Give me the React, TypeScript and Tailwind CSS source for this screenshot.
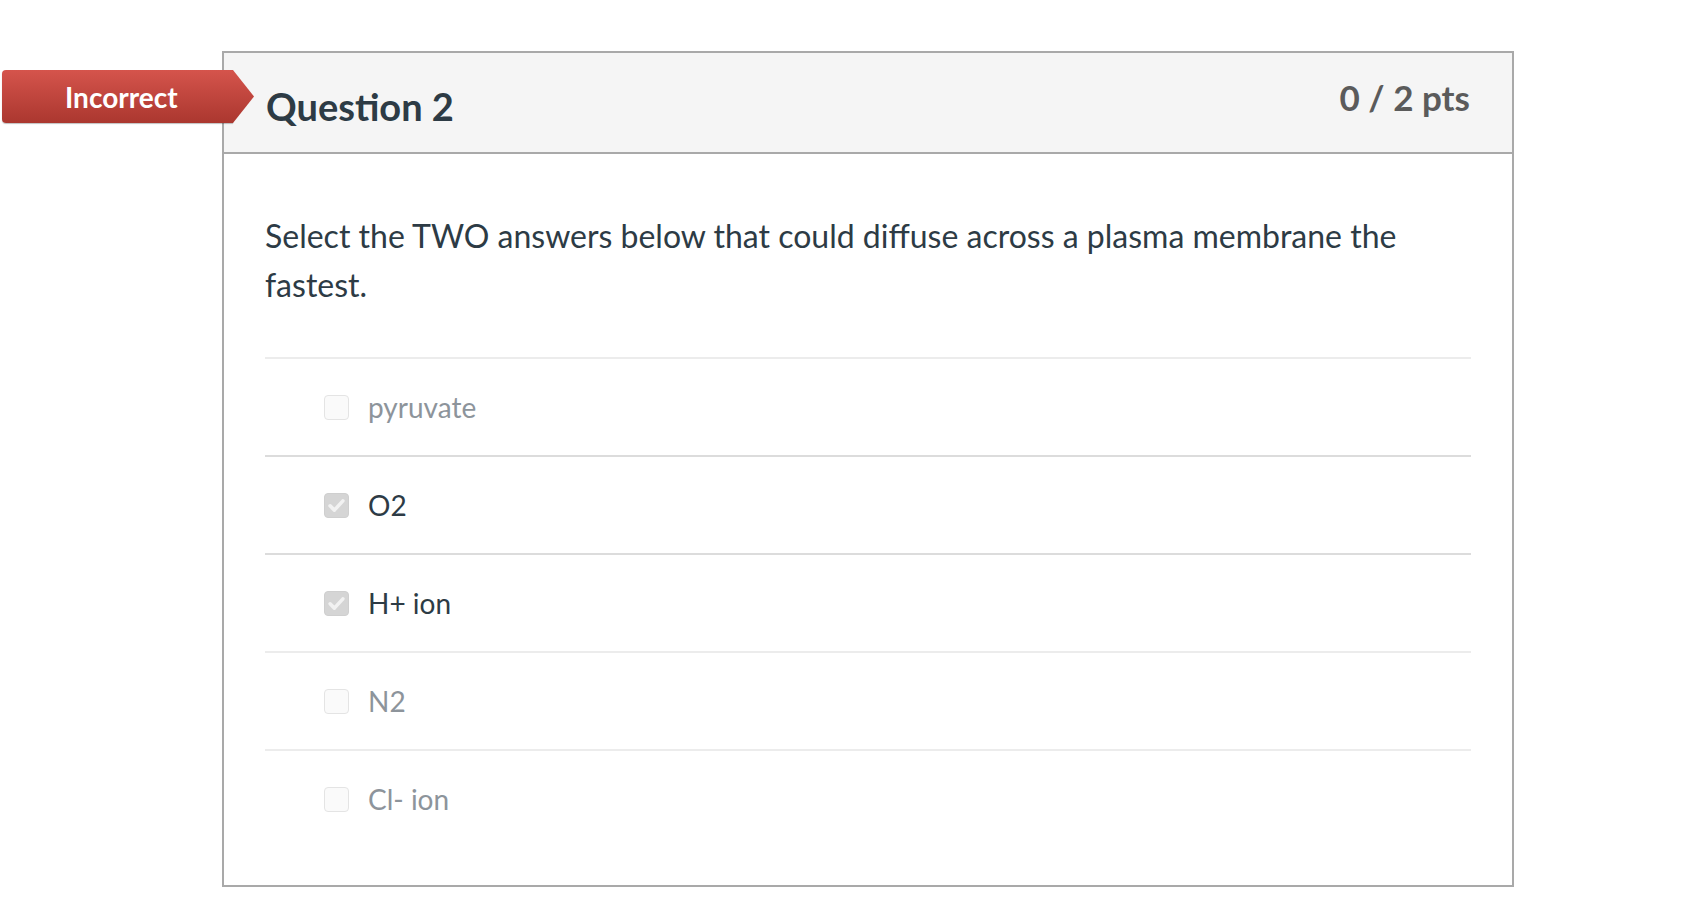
import React from "react";

const answers = [
  { label: "pyruvate", checked: false },
  { label: "O2", checked: true },
  { label: "H+ ion", checked: true },
  { label: "N2", checked: false },
  { label: "Cl- ion", checked: false },
];

function Box({ checked }: { checked: boolean }) {
  if (checked) {
    return (
      <div className="flex h-[25px] w-[25px] shrink-0 items-center justify-center rounded-[4px] border border-[#cfcfcf] bg-[#d5d5d5]">
        <svg width="19" height="19" viewBox="0 0 16 16">
          <path d="M2.6 8.3 L6.2 11.9 L13.4 4.1" fill="none" stroke="#f2f2f2" strokeWidth="3" strokeLinecap="round" strokeLinejoin="round" />
        </svg>
      </div>
    );
  }
  return <div className="h-[25px] w-[25px] shrink-0 rounded-[4px] border-[1.5px] border-[#e4e4e4] bg-[#fafafa]" />;
}

export default function App() {
  return (
    <div className="relative min-h-[916px] bg-white pt-[51px] font-['Lato','Liberation_Sans',sans-serif]">
      <div className="relative ml-[222px] w-[1292px] border-2 border-[#a9a9a9]">
        <div className="flex h-[101px] items-start justify-between border-b-2 border-[#a9a9a9] bg-[#f5f5f5] pl-[42px] pr-[42px]">
          <h2 className="pt-[34px] text-[38px] font-bold leading-[38px] text-[#2d3b45]">Question 2</h2>
          <div className="pt-[26px] text-[35px] font-bold leading-[36px] text-[#5b5b5b]">0 / 2 pts</div>
        </div>
        <div className="absolute left-[-222px] top-[17px] flex h-[53px]">
          <div className="flex h-[53px] w-[231px] items-center rounded-l-[4px] bg-gradient-to-b from-[#d5544c] to-[#ab372f] pl-[63px] shadow-[0_1px_1px_rgba(0,0,0,0.25)]">
            <span className="text-[28px] font-bold leading-none text-white">Incorrect</span>
          </div>
          <div className="h-[53px] w-[21px] bg-gradient-to-b from-[#d5544c] to-[#ab372f] [clip-path:polygon(0_0,100%_50%,0_100%)]" />
        </div>
        <div className="pb-[38px] pl-[41px] pr-[41px] pt-[57px]">
          <p className="text-[32px] leading-[49px] text-[#2d3b45]">
            Select the TWO answers below that could diffuse across a plasma membrane the fastest.
          </p>
          <div className="mt-[48px]">
            {answers.map((a) => (
              <div
                key={a.label}
                className={`flex h-[98px] items-center gap-[19px] border-t-2 pl-[59px] ${a.checked ? "border-[#dcdcdc]" : "border-[#ececec]"}`}
              >
                <Box checked={a.checked} />
                <span className={`text-[28px] leading-none ${a.checked ? "text-[#2d3b45]" : "text-[#8d949b]"}`}>{a.label}</span>
              </div>
            ))}
          </div>
        </div>
      </div>
    </div>
  );
}
